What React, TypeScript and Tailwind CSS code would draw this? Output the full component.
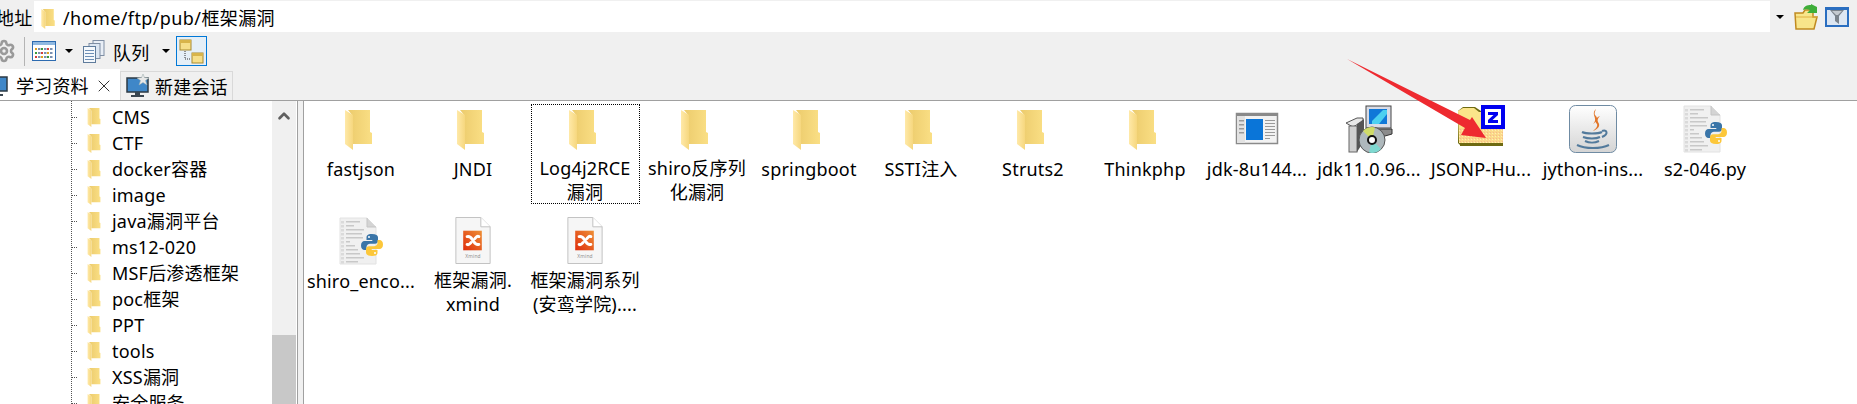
import * as React from "react"
import { ChevronUp, Settings, X } from "lucide-react"

const treeFolders = ["CMS", "CTF", "docker容器", "image", "java漏洞平台", "ms12-020", "MSF后渗透框架", "poc框架", "PPT", "tools", "XSS漏洞", "安全服务"]

function FolderShape({ className }: { className: string }) {
  return (
    <svg viewBox="0 0 27 40" className={className}>
      <defs>
        <linearGradient id="folderBack" x1="0" y1="0" x2="1" y2="0">
          <stop offset="0" stopColor="#eccb6c" />
          <stop offset="1" stopColor="#fadf85" />
        </linearGradient>
        <linearGradient id="folderFront" x1="0" y1="0" x2="1" y2="0">
          <stop offset="0" stopColor="#ffe9a8" />
          <stop offset="1" stopColor="#f6d77e" />
        </linearGradient>
      </defs>
      <path d="M3 0H25V22L27 23V34H8V6Z" fill="url(#folderBack)" />
      <path d="M0 0L8 5V40L0 34Z" fill="url(#folderFront)" />
    </svg>
  )
}

function PythonLogo() {
  return (
    <g transform="translate(23 16)">
      <path d="M12 1C7 1 6.500 3 6.500 4.500V7H12.300V8H4.500C2.500 8 1 9.700 1 12.500S2.500 17 4.500 17H6.500V14.300C6.500 12.300 8.200 10.800 10 10.800H15C16.700 10.800 18 9.500 18 7.800V4.500C18 2.500 16 1 12 1Z" fill="#3a75a8" />
      <path d="M12 1C7 1 6.500 3 6.500 4.500V7H12.300V8H4.500C2.500 8 1 9.700 1 12.500S2.500 17 4.500 17H6.500V14.300C6.500 12.300 8.200 10.800 10 10.800H15C16.700 10.800 18 9.500 18 7.800V4.500C18 2.500 16 1 12 1Z" fill="#fcc73a" transform="rotate(180 12 12)" />
      <circle cx="9" cy="4" r="1" fill="#fff" />
      <circle cx="15" cy="20" r="1" fill="#fff" />
    </g>
  )
}

function PythonDoc() {
  return (
    <svg viewBox="0 0 48 48" className="h-12 w-12">
      <path d="M3 1H30L39 10V47H3Z" fill="#f0f0f0" stroke="#e2e2e2" />
      <path d="M30 1V10H39" fill="#d4d4d4" stroke="#c4c4c4" />
      {[4, 8, 12, 16, 20, 24, 28, 32, 36, 40, 44].map((y, i) => (
        <g key={y}>
          <rect x="4" y={y} width="3" height="2.500" fill="#dadada" />
          <rect x="9" y={y} width={[14, 8, 18, 16, 17, 4, 9, 12, 14, 18, 12][i]} height="1.500" fill="#c8c8c8" />
        </g>
      ))}
      <PythonLogo />
    </svg>
  )
}

function XmindDoc() {
  return (
    <svg viewBox="0 0 48 48" className="h-12 w-12">
      <defs>
        <linearGradient id="xmindBg" x1="0" y1="1" x2="1" y2="0">
          <stop offset="0" stopColor="#df2d0c" />
          <stop offset="1" stopColor="#ee8f35" />
        </linearGradient>
      </defs>
      <path d="M6.500 0.500H32L41.500 10V47.500H6.500Z" fill="#f6f6f6" stroke="#c2c2c2" />
      <path d="M32 0.500V10H41.500" fill="#fff" stroke="#c2c2c2" />
      <rect x="14" y="14" width="19" height="20" fill="url(#xmindBg)" />
      <path d="M18 20C22 19 23 23 24 24C25 25 26 29 30 28M18 28C20 29 21 27 22 26M26 22C27 21 28 19 30 20" fill="none" stroke="#fff" strokeWidth="3" strokeLinecap="round" />
      <text x="24" y="42" textAnchor="middle" fontSize="5" fill="#909090">Xmind</text>
    </svg>
  )
}

function SetupWindow() {
  return (
    <svg viewBox="0 0 48 48" className="h-12 w-12">
      <rect x="3.500" y="8.500" width="41" height="30" fill="#f2f2f2" stroke="#8a8a8a" strokeWidth="1.500" />
      <rect x="3" y="8" width="42" height="3" fill="#8a8a8a" />
      <rect x="4" y="11" width="8" height="27" fill="#e2e2e2" />
      <rect x="13" y="14" width="17" height="21" fill="#0a75d8" />
      {[15, 18, 21, 24, 27, 30, 33].map(y => (
        <rect key={y} x="32" y={y} width={y === 33 ? 5 : 10} height="1" fill="#9a9a9a" />
      ))}
      {[15, 19, 23, 27].map(y => (
        <rect key={y} x="6" y={y} width="5" height="1.500" fill="#9a9a9a" />
      ))}
    </svg>
  )
}

function InstallerIcon() {
  return (
    <svg viewBox="0 0 48 48" className="h-12 w-12">
      <rect x="21" y="1" width="25" height="22" fill="#d9dce6" stroke="#444" />
      <rect x="24" y="4" width="18" height="15" fill="#1078d8" />
      <path d="M27 16L38 5H42V9L34 19H27Z" fill="#4cd0f0" />
      <path d="M26 24H47V29L40 31H26Z" fill="#8c8c8c" stroke="#333" />
      <path d="M1 18L12 13H18V16L8 22Z" fill="#e8e8e8" stroke="#555" />
      <rect x="4" y="21" width="8" height="26" fill="#d0d0d0" stroke="#666" />
      <path d="M12 19L19 14V36L12 47Z" fill="#555" />
      <circle cx="27" cy="35" r="13" fill="#aeb8bc" stroke="#555" />
      <path d="M27 35L18 26A13 13 0 0 1 30 22.400Z" fill="#cfdc68" />
      <path d="M27 35L36 44A13 13 0 0 1 24 47.600Z" fill="#7fd8d0" />
      <circle cx="27" cy="35" r="4" fill="#fff" stroke="#111" strokeWidth="2" />
    </svg>
  )
}

function ZipIcon() {
  return (
    <svg viewBox="0 0 48 48" className="h-12 w-12">
      <defs>
        <pattern id="dither" width="3" height="3" patternUnits="userSpaceOnUse">
          <rect width="3" height="3" fill="#fbd98a" />
          <rect width="1" height="1" fill="#f5b98c" />
          <rect x="2" y="1" width="1" height="1" fill="#fff0b0" />
        </pattern>
      </defs>
      <path d="M1 6L6 2H18L24 6H40V40H3L1 38Z" fill="#6e6a12" />
      <path d="M1 6L6 3H17L22 7H38V38H2Z" fill="#fbe58a" />
      <rect x="2" y="23" width="44" height="15" fill="url(#dither)" />
      <rect x="3" y="38" width="43" height="3" fill="#6e6a12" />
      <rect x="24" y="0" width="24" height="24" fill="#0000f0" />
      <rect x="28" y="4" width="16" height="16" fill="#fff" />
      <path d="M31 7H41V10L35.500 15H41V18H31V15L36.500 10H31Z" fill="#0000f0" />
    </svg>
  )
}

function JavaIcon() {
  return (
    <svg viewBox="0 0 48 48" className="h-12 w-12">
      <defs>
        <linearGradient id="javaBg" x1="0" y1="0" x2="0" y2="1">
          <stop offset="0" stopColor="#ffffff" />
          <stop offset="1" stopColor="#d4d4d4" />
        </linearGradient>
      </defs>
      <rect x="0.500" y="0.500" width="47" height="47" rx="6" fill="url(#javaBg)" stroke="#6f8ba3" />
      <path d="M27 4C21 10 30 13 24 19C27 17 30 13 26 10C25 9 26 6 27 4ZM31 11C26 13 25 16 28 19C29 22 26 24 24 26C29 24 32 21 29 17C28 15 29 13 31 11Z" fill="#e2762a" />
      <g fill="none" stroke="#527a9c" strokeWidth="2">
        <path d="M13 27C17 29 29 29 33 27" />
        <path d="M33 26C38 24 40 29 33 32" />
        <path d="M14 32C19 34 27 34 31 32" />
        <path d="M16 36C20 38 26 38 30 36" />
        <path d="M8 40C16 44 32 44 40 40" />
      </g>
    </svg>
  )
}

const files: { icon: React.ReactNode; lines: string[]; focused?: boolean }[] = [
  { icon: <FolderIcon />, lines: ["fastjson"] },
  { icon: <FolderIcon />, lines: ["JNDI"] },
  { icon: <FolderIcon />, lines: ["Log4j2RCE", "漏洞"], focused: true },
  { icon: <FolderIcon />, lines: ["shiro反序列", "化漏洞"] },
  { icon: <FolderIcon />, lines: ["springboot"] },
  { icon: <FolderIcon />, lines: ["SSTI注入"] },
  { icon: <FolderIcon />, lines: ["Struts2"] },
  { icon: <FolderIcon />, lines: ["Thinkphp"] },
  { icon: <SetupWindow />, lines: ["jdk-8u144..."] },
  { icon: <InstallerIcon />, lines: ["jdk11.0.96..."] },
  { icon: <ZipIcon />, lines: ["JSONP-Hu..."] },
  { icon: <JavaIcon />, lines: ["jython-ins..."] },
  { icon: <PythonDoc />, lines: ["s2-046.py"] },
  { icon: <PythonDoc />, lines: ["shiro_enco..."] },
  { icon: <XmindDoc />, lines: ["框架漏洞.", "xmind"] },
  { icon: <XmindDoc />, lines: ["框架漏洞系列", "(安鸾学院)...."] },
]

function FolderIcon() {
  return (
    <div className="flex h-12 w-12 pt-[5px] pl-2">
      <FolderShape className="h-10 w-[27px]" />
    </div>
  )
}

function DropArrow() {
  return <div className="h-0 w-0 border-x-[4px] border-t-[4px] border-x-transparent border-t-black" />
}

function MonitorIcon({ spark }: { spark?: boolean }) {
  return (
    <svg viewBox="0 0 24 24" className="h-6 w-6 shrink-0">
      <rect x="1" y="4" width="21" height="14" fill="#3f87c8" stroke="#2d3a44" strokeWidth="1.500" />
      <rect x="9" y="18" width="5" height="3" fill="#3a4650" />
      <rect x="5" y="21" width="13" height="2" fill="#3a4650" />
      {spark && <path d="M17 0L18.500 3.500L23 4L19.500 6.500L21 11L17 8.500L13 11L14.500 6.500L11 4L15.500 3.500Z" fill="#e8e8e8" stroke="#9aa" strokeWidth="0.500" />}
    </svg>
  )
}

export default function App() {
  return (
    <div className="relative flex h-[404px] w-[1857px] flex-col overflow-hidden bg-[#f0f0f0] font-['Noto_Sans','Noto_Sans_CJK_SC',sans-serif] text-[18px] tracking-[0.2px] text-black">
      {/* address bar */}
      <div className="flex h-8 shrink-0 items-center pt-px">
        <span className="-ml-1 w-8 shrink-0 pt-1 whitespace-nowrap">地址</span>
        <div className="ml-1.5 flex h-[31px] w-[1755px] items-center bg-white pl-[7px]">
          <FolderShape className="mt-1 h-5 w-3.5" />
          <span className="ml-2 flex-1 pt-[3px] tracking-[0.4px]">/home/ftp/pub/框架漏洞</span>
          <div className="flex h-full w-[19px] items-center justify-center bg-[#f0f0f0]">
            <DropArrow />
          </div>
        </div>
        <svg viewBox="0 0 24 26" className="ml-[5px] h-[26px] w-6">
          <path d="M1 9H9L11 6H19V13H23L20 25H2Z" fill="#f8e58a" stroke="#c08a20" strokeWidth="1.500" />
          <path d="M2 13H23" stroke="#e0b040" />
          <path d="M9 6C10 2 13 1 17 1V0L23 3V9H13L16 6C13 5 11 5 9 6Z" fill="#3eae3a" />
        </svg>
        <div className="ml-[7px] flex h-5 w-6 items-center justify-center border-2 border-t-[3px] border-[#2a6ec0] bg-[#dce6f2]">
          <svg viewBox="0 0 16 14" className="h-3.5 w-4">
            <path d="M1 0H15L10 6V14L6 11V6Z" fill="#7a838c" />
            <path d="M3 1H13L9 5H7Z" fill="#c4cad0" />
          </svg>
        </div>
      </div>

      {/* toolbar */}
      <div className="flex h-[38px] shrink-0 items-center">
        <Settings className="-ml-2 h-6 w-6 text-[#9a9a9a]" strokeWidth={2.6} />
        <div className="ml-2 h-[29px] w-px bg-[#b4b4b4]" />
        <svg viewBox="0 0 24 20" className="ml-[7px] h-5 w-6">
          <rect x="0.500" y="0.500" width="23" height="19" fill="#fff" stroke="#2d6bb0" />
          <rect x="1" y="1" width="22" height="3" fill="#8fb8e0" />
          {[7, 11, 15].map(y => [3, 9, 15].map((x, i) => (
            <g key={`${x}-${y}`}>
              <rect x={x} y={y} width="2" height="2" fill={["#d43c3c", "#e0a020", "#3a9a3a"][(i + y) % 3]} />
              <rect x={x + 3} y={y} width="2.500" height="2" fill="#7a90b0" />
            </g>
          )))}
        </svg>
        <div className="ml-[9px]"><DropArrow /></div>
        <svg viewBox="0 0 22 23" className="ml-[10px] h-[23px] w-[22px]">
          <rect x="10" y="0.500" width="11" height="15" fill="#e8eef6" stroke="#7e8ea4" />
          <rect x="6" y="3.500" width="11" height="15" fill="#dce6f2" stroke="#7e8ea4" />
          <rect x="0.500" y="6.500" width="12" height="16" fill="#f4f8fc" stroke="#5f7c9c" />
          {[10, 13, 16, 19].map(y => (
            <rect key={y} x="2" y={y} width="9" height="1" fill="#6d8fb6" />
          ))}
        </svg>
        <span className="ml-2 w-9 pt-1 whitespace-nowrap">队列</span>
        <div className="ml-[13px]"><DropArrow /></div>
        <div className="ml-[6px] flex h-[30px] w-[31px] items-center justify-center border border-[#0078d7] bg-[#e5eff7]">
          <svg viewBox="0 0 25 26" className="h-[26px] w-[25px]">
            <path d="M6 13V21H12" fill="none" stroke="#333" strokeDasharray="1 1" />
            <rect x="1" y="2" width="11" height="10" fill="#f6df8a" stroke="#a88a30" />
            <rect x="1" y="2" width="11" height="3" fill="#d8b44a" />
            <rect x="13" y="15" width="11" height="10" fill="#f6df8a" stroke="#a88a30" />
            <rect x="13" y="15" width="11" height="3" fill="#d8b44a" />
          </svg>
        </div>
      </div>

      {/* tabs */}
      <div className="flex h-[31px] shrink-0 items-end border-b border-[#a0a0a0]">
        <div className="flex h-[31px] w-[120px] items-center bg-white">
          <div className="-ml-[15px]"><MonitorIcon /></div>
          <span className="ml-[7px] pt-[3px] whitespace-nowrap">学习资料</span>
          <X className="mt-[3px] ml-[5px] h-5 w-5 text-[#333]" strokeWidth={1.2} />
        </div>
        <div className="flex h-[29px] w-[113px] items-center border-x border-t border-[#d9d9d9] pl-[5px]">
          <MonitorIcon spark />
          <span className="ml-[5px] pt-[3px] whitespace-nowrap">新建会话</span>
        </div>
      </div>

      {/* panes */}
      <div className="flex min-h-0 flex-1">
        <div className="flex w-[298px] shrink-0 overflow-hidden border-r border-[#a0a0a0] bg-white">
          <div className="w-[272px] pl-[71px]">
            <div className="border-l border-dotted border-[#555] pt-[3px]">
              {treeFolders.map(name => (
                <div key={name} className="flex h-[26px] items-center">
                  <div className="w-[5px] border-t border-dotted border-[#555]" />
                  <FolderShape className="ml-2.5 h-[19px] w-3.5" />
                  <span className="ml-[11px] whitespace-nowrap">{name}</span>
                </div>
              ))}
            </div>
          </div>
          <div className="flex w-6 flex-col bg-[#f0f0f0]">
            <div className="flex h-[234px] justify-center pt-1.5">
              <ChevronUp className="h-[18px] w-[18px] text-[#606060]" strokeWidth={3.5} />
            </div>
            <div className="flex-1 bg-[#c8c8c8]" />
          </div>
        </div>
        <div className="ml-[5px] grid flex-1 grid-cols-[repeat(13,112px)] auto-rows-[112px] border-l border-[#a0a0a0] bg-white pl-px">
          {files.map(file => (
            <div key={file.lines.join("")} className="pt-[3px]">
              <div className={file.focused ? "mx-auto flex h-[100px] w-[109px] flex-col items-center pt-px outline outline-1 -outline-offset-1 outline-dotted outline-black" : "mx-auto flex h-[100px] w-[109px] flex-col items-center pt-px"}>
                {file.icon}
                <div className="mt-1 text-center leading-6 whitespace-nowrap">
                  {file.lines.map(line => <div key={line}>{line}</div>)}
                </div>
              </div>
            </div>
          ))}
        </div>
      </div>

      {/* red annotation arrow */}
      <svg viewBox="0 0 1857 404" className="pointer-events-none absolute inset-0 h-[404px] w-[1857px]">
        <path d="M1347 59L1470 120L1472 117L1486 138L1461 135L1465 128Z" fill="#ee2a30" />
      </svg>
    </div>
  )
}
